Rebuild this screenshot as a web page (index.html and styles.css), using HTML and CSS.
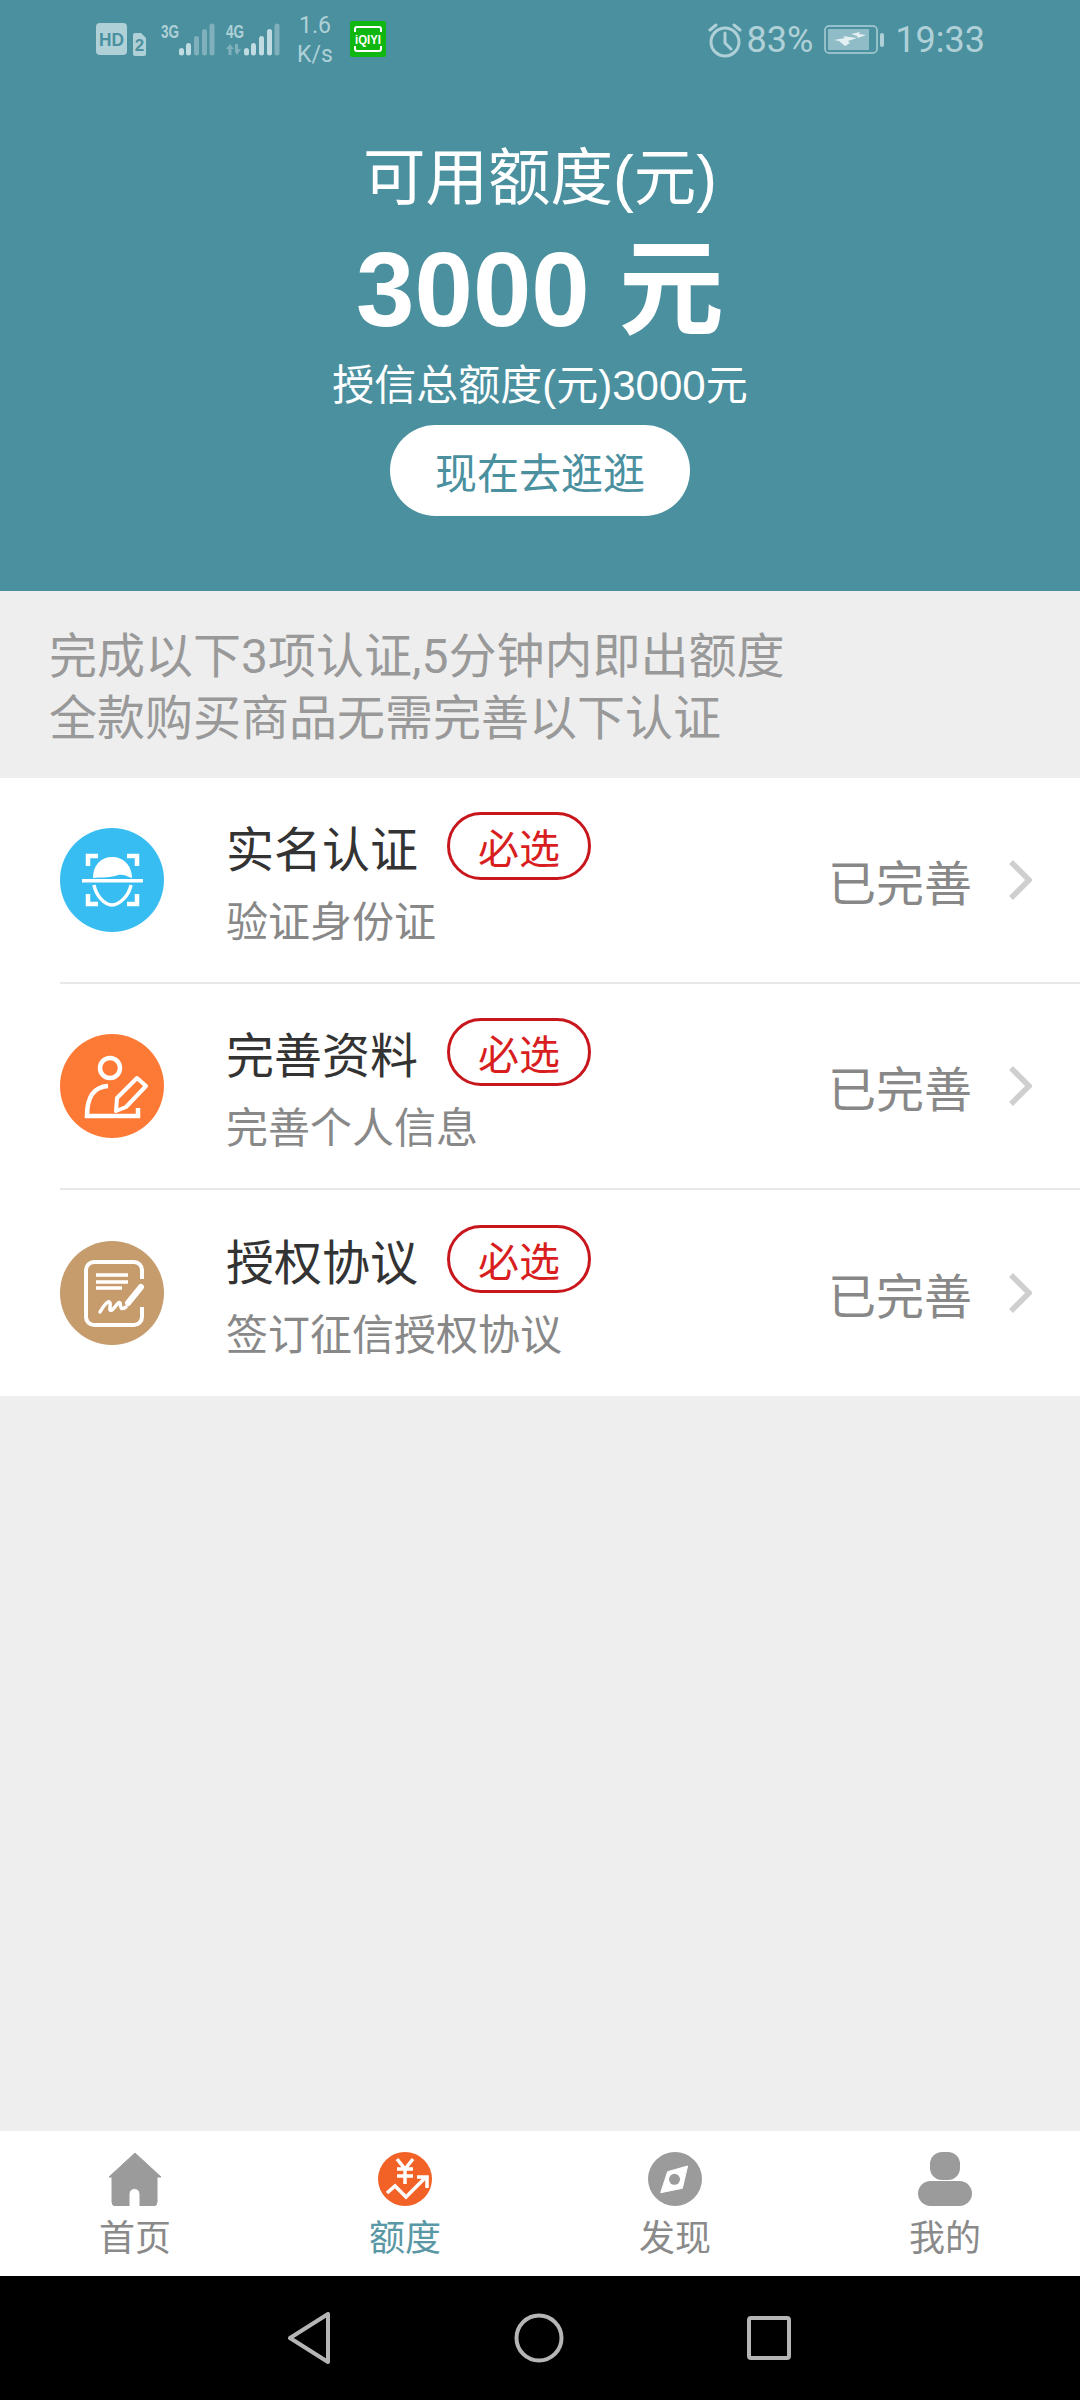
FILE: index.html
```html
<!DOCTYPE html>
<html lang="zh-CN">
<head>
    <meta charset="UTF-8">
    <meta name="viewport" content="width=device-width, initial-scale=1.0">
    <title>额度</title>
    <link rel="stylesheet" href="styles.css">
</head>
<body>

<div class="page">
    <header class="top">
        <div class="status-bar">
            <div class="status-left">
                <svg class="ic-hd" width="52" height="34" viewBox="0 0 52 34">
                    <rect x="0" y="1" width="31" height="32" rx="4" fill="#b0d0d8"/>
                    <path d="M39 11h6l5 5v16a2 2 0 0 1-2 2H39a2 2 0 0 1-2-2V13a2 2 0 0 1 2-2z" fill="#b0d0d8"/>
                    <text x="3" y="24" class="ic-hd-t" textLength="25" lengthAdjust="spacingAndGlyphs">HD</text>
                    <text x="43.5" y="29" class="ic-hd-n">2</text>
                </svg>
                <svg class="ic-sig" width="54" height="34" viewBox="0 0 54 34">
                    <text x="0" y="15.5" class="ic-net" textLength="18" lengthAdjust="spacingAndGlyphs">3G</text>
                    <g fill="#7fb0bb">
                        <rect x="18" y="26" width="5" height="7.5" rx="2.5" fill="#c0dbe1"/>
                        <rect x="25" y="21" width="5" height="12.5" rx="2.5" fill="#c0dbe1"/>
                        <rect x="33" y="14" width="5" height="19.5" rx="2.5"/>
                        <rect x="41" y="7" width="5" height="26.5" rx="2.5"/>
                        <rect x="48.5" y="1.5" width="5" height="32" rx="2.5"/>
                    </g>
                </svg>
                <svg class="ic-sig" width="54" height="34" viewBox="0 0 54 34">
                    <text x="0" y="15.5" class="ic-net" textLength="18" lengthAdjust="spacingAndGlyphs">4G</text>
                    <path d="M0 27l4-5 4 5H5.5v6h-3v-6zM9 22h3v5h3l-4 6-2-3z" fill="#7fb0bb"/>
                    <g fill="#c0dbe1">
                        <rect x="18" y="26" width="5" height="7.5" rx="2.5"/>
                        <rect x="25" y="21" width="5" height="12.5" rx="2.5"/>
                        <rect x="33" y="14" width="5" height="19.5" rx="2.5"/>
                        <rect x="41" y="7" width="5" height="26.5" rx="2.5"/>
                        <rect x="48.5" y="1.5" width="5" height="32" rx="2.5" fill="#7fb0bb"/>
                    </g>
                </svg>
                <div class="net-speed">1.6<br>K/s</div>
                <svg class="ic-qiyi" width="36" height="36" viewBox="0 0 36 36">
                    <rect width="36" height="36" rx="2" fill="#10b710"/>
                    <path d="M5 11V8a2 2 0 0 1 2-2H29a2 2 0 0 1 2 2V11M5 25V28a2 2 0 0 0 2 2H29a2 2 0 0 0 2-2V25" fill="none" stroke="#fff" stroke-width="2"/>
                    <text x="5" y="23" class="ic-qiyi-t" textLength="26" lengthAdjust="spacingAndGlyphs">iQIYI</text>
                </svg>
            </div>
            <div class="status-right">
                <svg width="34" height="36" viewBox="0 0 34 36" fill="none" stroke="#b0d0d8" stroke-width="3">
                    <circle cx="17" cy="20" r="14"/>
                    <path d="M17 11v10l6 6M2 8l6-5M32 8l-6-5" stroke-linecap="round"/>
                </svg>
                <span class="batt-pct">83%</span>
                <svg class="ic-batt" width="60" height="30" viewBox="0 0 60 30">
                    <rect x="1" y="1" width="52" height="27" rx="4" fill="none" stroke="#b0d0d8" stroke-width="1.5"/>
                    <rect x="4" y="4" width="41" height="21" rx="1" fill="#8fbcc6"/>
                    <rect x="56" y="8" width="4" height="14" rx="2" fill="#b0d0d8"/>
                    <path d="M10 15l11-2-2-2 14 2-9 3 2 2-5 3-6-5zM27 9l9-2-1 2 7 1-8 3-1-2z" fill="#e4f0f3"/>
                </svg>
                <span class="clock">19:33</span>
            </div>
        </div>
        <div class="credit">
            <div class="credit-title">可用额度(元)</div>
            <div class="credit-amount">3000 元</div>
            <div class="credit-total">授信总额度(元)3000元</div>
            <a class="go-btn">现在去逛逛</a>
        </div>
    </header>

    <div class="notice">
        <div>完成以下3项认证,5分钟内即出额度</div>
        <div>全款购买商品无需完善以下认证</div>
    </div>

    <section class="list">
        <div class="row">
            <svg class="row-icon" viewBox="0 0 104 104">
                <circle cx="52" cy="52" r="52" fill="#38bdf2"/>
                <path d="M38 28H28V38M67 28H77V38M28 66V76H38M77 66V76H67" fill="none" stroke="#fff" stroke-width="4.5"/>
                <path d="M33 50C33 37 41 29 52 29S72 37 72 50C66 48 62 45 55 48 48 50 40 49 33 50Z" fill="#fff"/>
                <rect x="22" y="51" width="61" height="3.5" fill="#fff"/>
                <path d="M34 57C36 68 45 77 52 77S69 68 71 57" fill="none" stroke="#fff" stroke-width="3.5"/>
            </svg>
            <div class="row-body">
                <div class="row-head">
                    <span class="row-title">实名认证</span>
                    <span class="tag">必选</span>
                </div>
                <div class="row-sub">验证身份证</div>
            </div>
            <span class="row-state">已完善</span>
            <svg class="chevron" width="24" height="42" viewBox="0 0 24 42"><path d="M3 3l18 18L3 39" fill="none" stroke="#cfcfcf" stroke-width="5.5"/></svg>
        </div>

        <div class="row">
            <svg class="row-icon" viewBox="0 0 104 104">
                <circle cx="52" cy="52" r="52" fill="#fd7a36"/>
                <circle cx="50" cy="34" r="10" fill="none" stroke="#fff" stroke-width="4.5"/>
                <path d="M48 52C34 53 27 62 27 82H78V74" fill="none" stroke="#fff" stroke-width="4.5"/>
                <path d="M56 77L57 64 77 44 86 52 66 73Z" fill="none" stroke="#fff" stroke-width="4" stroke-linejoin="round"/>
            </svg>
            <div class="row-body">
                <div class="row-head">
                    <span class="row-title">完善资料</span>
                    <span class="tag">必选</span>
                </div>
                <div class="row-sub">完善个人信息</div>
            </div>
            <span class="row-state">已完善</span>
            <svg class="chevron" width="24" height="42" viewBox="0 0 24 42"><path d="M3 3l18 18L3 39" fill="none" stroke="#cfcfcf" stroke-width="5.5"/></svg>
        </div>

        <div class="row">
            <svg class="row-icon" viewBox="0 0 104 104">
                <circle cx="52" cy="52" r="52" fill="#c69c6d"/>
                <path d="M82 38V29A8 8 0 0 0 74 21H34A8 8 0 0 0 26 29V76A8 8 0 0 0 34 84H74A8 8 0 0 0 82 76V66" fill="none" stroke="#fff" stroke-width="4"/>
                <path d="M36 34H68M36 41H68M36 47H62" stroke="#fff" stroke-width="3.5"/>
                <path d="M40 71C44 64 49 58 50 62 51 66 48 70 52 69 56 66 58 60 60 62 61 66 60 70 66 66" fill="none" stroke="#fff" stroke-width="3.5" stroke-linecap="round"/>
                <path d="M68 62L81 46" stroke="#fff" stroke-width="6" stroke-linecap="round"/>
            </svg>
            <div class="row-body">
                <div class="row-head">
                    <span class="row-title">授权协议</span>
                    <span class="tag">必选</span>
                </div>
                <div class="row-sub">签订征信授权协议</div>
            </div>
            <span class="row-state">已完善</span>
            <svg class="chevron" width="24" height="42" viewBox="0 0 24 42"><path d="M3 3l18 18L3 39" fill="none" stroke="#cfcfcf" stroke-width="5.5"/></svg>
        </div>
    </section>

    <div class="spacer"></div>

    <nav class="tabs">
        <div class="tab">
            <svg width="54" height="54" viewBox="0 0 54 54">
                <path d="M27 1L53 25H49V50A4 4 0 0 1 45 54H32V42A5.5 5.5 0 0 0 21 42V54H8A4 4 0 0 1 4 50V25H1Z" fill="#9b9b9b" stroke="#9b9b9b" stroke-width="1" stroke-linejoin="round"/>
            </svg>
            <span>首页</span>
        </div>
        <div class="tab tab-on">
            <svg width="54" height="54" viewBox="0 0 54 54">
                <circle cx="27" cy="27" r="27" fill="#f26126"/>
                <path d="M19 7L27 17 35 7M19 17H35M19 24H35M27 17V32" fill="none" stroke="#fff" stroke-width="3.5"/>
                <path d="M9 41L17 34 28 45 48 25M39 25H49V36" fill="none" stroke="#fff" stroke-width="3.5"/>
            </svg>
            <span>额度</span>
        </div>
        <div class="tab">
            <svg width="54" height="54" viewBox="0 0 54 54">
                <circle cx="27" cy="27" r="27" fill="#9b9b9b"/>
                <path d="M39.6 14L34.4 36.3 12.7 40.7 19.6 19.7Z" fill="#fff" stroke="#fff" stroke-linejoin="round"/>
                <circle cx="26.5" cy="27.3" r="5.5" fill="#9b9b9b"/>
            </svg>
            <span>发现</span>
        </div>
        <div class="tab">
            <svg width="54" height="54" viewBox="0 0 54 54">
                <rect x="12" y="0" width="30" height="28" rx="12" fill="#9b9b9b"/>
                <rect x="0" y="29" width="54" height="25" rx="12.5" fill="#9b9b9b"/>
            </svg>
            <span>我的</span>
        </div>
    </nav>

    <div class="sys-nav">
        <svg width="44" height="52" viewBox="0 0 44 52"><path d="M3 26L41 2V50Z" fill="none" stroke="#b5b5b5" stroke-width="4" stroke-linejoin="round"/></svg>
        <svg width="50" height="50" viewBox="0 0 50 50"><circle cx="25" cy="25" r="22.5" fill="none" stroke="#b5b5b5" stroke-width="4"/></svg>
        <svg width="44" height="44" viewBox="0 0 44 44"><rect x="2" y="2" width="40" height="40" rx="2" fill="none" stroke="#b5b5b5" stroke-width="4"/></svg>
    </div>
</div>

</body>
</html>
```

FILE: styles.css
```css
* {
    box-sizing: border-box;
}
body {
    margin: 0;
    font-family: "Liberation Sans", "Noto Sans CJK SC", sans-serif;
    background-color: #eeeeee;
}
.page {
    display: flex;
    flex-direction: column;
    width: 1080px;
    height: 2400px;
}

/* teal header */
.top {
    height: 591px;
    background-color: #4a909f;
    color: #fff;
}
.status-bar {
    display: flex;
    justify-content: space-between;
    align-items: center;
    height: 80px;
    padding: 0 95px 0 96px;
    color: #b0d0d8;
    font-family: Roboto, sans-serif;
}
.status-left {
    display: flex;
    align-items: center;
}
.status-left svg {
    margin-bottom: 3px;
}
.ic-hd {
    margin-right: 13px;
}
.ic-hd-t {
    font: bold 19px "Liberation Sans", sans-serif;
    fill: #4a909f;
}
.ic-hd-n {
    font: bold 17px "Liberation Sans", sans-serif;
    fill: #4a909f;
    text-anchor: middle;
}
.ic-sig {
    margin-right: 11px;
}
.ic-net {
    font: bold 19px "Liberation Sans", sans-serif;
    fill: #b0d0d8;
}
.ic-qiyi-t {
    font: bold 12px "Liberation Sans", sans-serif;
    fill: #fff;
}
.net-speed {
    width: 40px;
    margin: 0 15px 0 4px;
    font-size: 23px;
    line-height: 29px;
    text-align: center;
    white-space: nowrap;
}
.status-right {
    display: flex;
    align-items: center;
    font-size: 36px;
}
.batt-pct {
    margin: 0 11px 0 5px;
}
.clock {
    margin-left: 11px;
}
.credit {
    display: flex;
    flex-direction: column;
    align-items: center;
    padding-top: 62px;
}
.credit-title {
    font-size: 62.5px;
    line-height: 72px;
}
.credit-amount {
    margin-top: 20px;
    font-size: 105px;
    font-weight: bold;
    line-height: 112px;
}
.credit-total {
    margin-top: 15px;
    font-size: 42px;
    line-height: 50px;
}
.go-btn {
    display: flex;
    align-items: center;
    justify-content: center;
    width: 300px;
    height: 91px;
    margin-top: 14px;
    border-radius: 46px;
    background-color: #fff;
    color: #4a909f;
    font-size: 42px;
}

/* grey hint band */
.notice {
    height: 187px;
    padding: 35px 0 0 49px;
    color: #999;
    font-family: Roboto, "Noto Sans CJK SC", sans-serif;
    font-size: 48px;
    line-height: 62px;
}

.list {
    background-color: #fff;
}
.row {
    display: flex;
    align-items: center;
    height: 206px;
    margin-left: 60px;
    padding-right: 48px;
    border-bottom: 2px solid #e8e8e8;
}
.row:last-child {
    border-bottom: none;
}
.row-icon {
    width: 104px;
    height: 104px;
    flex-shrink: 0;
}
.row-body {
    flex: 1;
    margin-left: 62px;
    padding-top: 2px;
}
.row-head {
    display: flex;
    align-items: center;
    height: 68px;
}
.row-title {
    color: #333;
    font-size: 48px;
}
.tag {
    display: flex;
    align-items: center;
    justify-content: center;
    width: 144px;
    height: 68px;
    margin-left: 29px;
    border: 3px solid #c8161d;
    border-radius: 34px;
    color: #d81e1e;
    font-size: 41px;
}
.row-sub {
    margin-top: 15px;
    color: #888;
    font-size: 42px;
    line-height: 56px;
}
.row-state {
    margin-right: 36px;
    color: #888;
    font-size: 48px;
}

.spacer {
    flex: 1;
}

/* bottom tabs */
.tabs {
    display: grid;
    grid-template-columns: repeat(4, 1fr);
    height: 145px;
    padding-top: 21px;
    background-color: #fff;
}
.tab {
    display: flex;
    flex-direction: column;
    align-items: center;
    color: #8a8a8a;
    font-size: 36px;
}
.tab span {
    margin-top: 11px;
    line-height: 44px;
}
.tab-on {
    color: #5a98a5;
}

.sys-nav {
    display: flex;
    align-items: center;
    justify-content: center;
    gap: 183px;
    height: 124px;
    padding-right: 2px;
    background-color: #000;
}
```
